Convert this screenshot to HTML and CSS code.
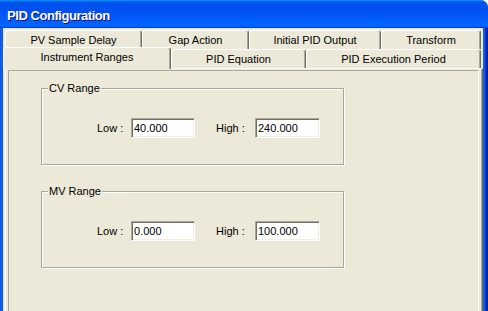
FILE: index.html
```html
<!DOCTYPE html>
<html>
<head>
<meta charset="utf-8">
<link rel="stylesheet" href="styles.css">
</head>
<body>
<div class="window">
  <div class="titlebar"><span class="title">PID Configuration</span></div>
  <div class="frame">
    <div class="client">
      <div class="tabs">
        <div class="tabrow">
          <div class="tab t-pv">PV Sample Delay</div>
          <div class="tab t-gap">Gap Action</div>
          <div class="tab t-init">Initial PID Output</div>
          <div class="tab t-tr">Transform</div>
        </div>
        <div class="tabrow">
          <div class="tab selected t-ir">Instrument Ranges</div>
          <div class="tab t-eq">PID Equation</div>
          <div class="tab t-ex">PID Execution Period</div>
        </div>
      </div>
      <div class="panel">
        <div class="page">
          <fieldset class="group">
            <legend>CV Range</legend>
            <div class="row">
              <label class="lbl lbl-low">Low :</label>
              <input class="field field-low" type="text" value="40.000">
              <label class="lbl lbl-high">High :</label>
              <input class="field field-high" type="text" value="240.000">
            </div>
          </fieldset>
          <fieldset class="group group-mv">
            <legend>MV Range</legend>
            <div class="row">
              <label class="lbl lbl-low">Low :</label>
              <input class="field field-low" type="text" value="0.000">
              <label class="lbl lbl-high">High :</label>
              <input class="field field-high" type="text" value="100.000">
            </div>
          </fieldset>
        </div>
      </div>
    </div>
  </div>
</div>
</body>
</html>
```
FILE: styles.css
```css
html, body {
  margin: 0;
  padding: 0;
  background: #ffffff;
}
body {
  font-family: "Liberation Sans", Arial, sans-serif;
  font-size: 11px;
  color: #000;
}
.window {
  width: 488px;
  height: 311px;
  display: flex;
  flex-direction: column;
  overflow: hidden;
  border-top-right-radius: 8px;
  background: #0831d9;
}
.titlebar {
  flex: none;
  height: 28px;
  box-sizing: border-box;
  padding: 3px 0 0 7px;
  line-height: 25px;
  background: linear-gradient(180deg, #0997ff, #0053ee 8%, #0050ee 40%, #0066ff 88%, #0066ff 93%, #005bff 95%, #003dd7 96%, #003dd7);
}
.title {
  color: #fff;
  font-weight: bold;
  font-size: 13px;
  letter-spacing: -0.45px;
  text-shadow: 1px 1px #0f1089;
}
.frame {
  flex: 1;
  display: flex;
  padding: 0 5px 0 3px;
  min-height: 0;
  background: linear-gradient(90deg, #0a3ed6 0, #1a6af0 1px, #0d57e6 2px, #0d57e6 483px, #166ae8 484px, #0a46e0 485px, #0831d9 486px, #001ea0 487px);
}
.client {
  flex: 1;
  display: flex;
  flex-direction: column;
  background: #ece9d8;
  padding: 2px 0 0 2px;
  min-height: 0;
}
.tabs {
  width: 476px;
  flex: none;
}
.tabrow {
  display: flex;
  height: 19px;
}
.tab {
  box-sizing: border-box;
  height: 19px;
  padding-top: 1px;
  line-height: 17px;
  text-align: center;
  white-space: nowrap;
  border-top: 1px solid #fff;
  border-left: 1px solid #fff;
  border-right: 1px solid #716f64;
  box-shadow: inset -1px 0 #aca899;
  border-radius: 3px 3px 0 0;
  background: #ece9d8;
}
.t-pv { width: 137px; }
.t-gap { width: 107px; }
.t-init { width: 132px; }
.t-tr { width: 100px; }
.t-ir { width: 166px; }
.t-eq { width: 135px; }
.t-ex { width: 175px; }
.tab.selected {
  position: relative;
  z-index: 1;
  width: 168px;
  height: 22px;
  margin: -2px 0 -1px -2px;
}
.panel {
  flex: 1;
  display: flex;
  flex-direction: column;
  border-top: 1px solid #fff;
  border-left: 1px solid #fff;
  border-right: 1px solid #716f64;
  box-shadow: inset -1px 0 #aca899;
  padding: 1px 3px 0 2px;
  min-height: 0;
}
.page {
  flex: 1;
  border-top: 1px solid #aca899;
  border-left: 1px solid #aca899;
  border-right: 1px solid #fff;
}
.group {
  box-sizing: border-box;
  width: 303px;
  min-width: 0;
  margin: 11px 0 0 32px;
  padding: 0 0 26px 0;
  border: 1px solid #aca899;
  box-shadow: inset 1px 1px #fff, 1px 1px #fff;
}
.group-mv {
  margin-top: 20px;
}
.group legend {
  margin-left: 6px;
  padding: 0 1px;
  line-height: 13px;
  font-size: 11px;
  background: #ece9d8;
}
.row {
  display: flex;
  align-items: center;
  margin-top: 23px;
  padding-left: 55px;
}
.lbl {
  white-space: nowrap;
}
.lbl-low { width: 34px; }
.lbl-high { width: 39px; margin-left: 21px; }
.field {
  box-sizing: border-box;
  height: 20px;
  margin: 0;
  padding: 0 0 0 2px;
  font-family: "Liberation Sans", Arial, sans-serif;
  font-size: 11px;
  color: #000;
  background: #fff;
  border: 1px solid;
  border-color: #aca899 #fff #fff #aca899;
  box-shadow: inset 1px 1px #716f64, inset -1px -1px #f1efe2;
  outline: none;
}
.field-low { width: 64px; }
.field-high { width: 65px; }
```
